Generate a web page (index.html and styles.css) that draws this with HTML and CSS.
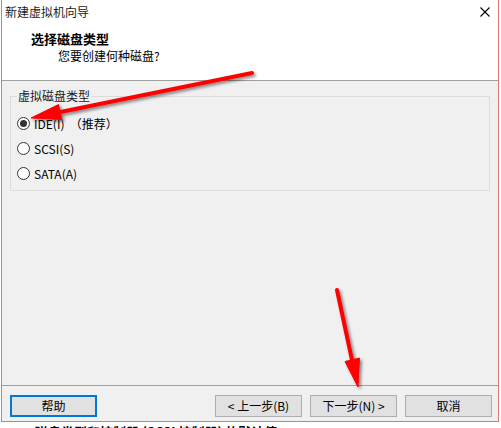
FILE: index.html
```html
<!DOCTYPE html>
<html lang="zh-CN">

<head>
    <meta charset="UTF-8">
    <title>新建虚拟机向导</title>
    <link rel="stylesheet" href="styles.css">
</head>

<body>
    <div id="screen">
        <div id="wizard">
            <div class="titlebar">
                <span class="title">新建虚拟机向导</span>
                <svg class="close" width="10" height="10" viewBox="0 0 10 10">
                    <path d="M0.5 0.5 L9.5 9.5 M9.5 0.5 L0.5 9.5" stroke="#000" stroke-width="1.1" fill="none" />
                </svg>
            </div>
            <div class="header">
                <div class="head-title">选择磁盘类型</div>
                <div class="head-sub">您要创建何种磁盘?</div>
            </div>
            <div class="body">
                <fieldset class="group">
                    <legend>虚拟磁盘类型</legend>
                    <div class="option"><span class="radio checked"></span><span>IDE(I) &nbsp;（推荐）</span></div>
                    <div class="option"><span class="radio"></span><span>SCSI(S)</span></div>
                    <div class="option"><span class="radio"></span><span>SATA(A)</span></div>
                </fieldset>
            </div>
            <div class="footer">
                <button class="btn focused">帮助</button>
                <button class="btn push">&lt; 上一步(B)</button>
                <button class="btn">下一步(N) &gt;</button>
                <button class="btn">取消</button>
            </div>
        </div>
        <div class="behind">磁盘类型和控制器 (SCSI 控制器) 的默认值</div>

        <svg class="arrows" width="501" height="428" viewBox="0 0 501 428">
            <defs>
                <filter id="shade" x="-20%" y="-20%" width="140%" height="140%">
                    <feDropShadow dx="2" dy="2" stdDeviation="1.5" flood-color="#000" flood-opacity="0.45" />
                </filter>
            </defs>
            <g filter="url(#shade)" fill="#ff0000" stroke="#ff0000">
                <line x1="252" y1="73" x2="58" y2="112.5" stroke-width="4" stroke-linecap="round" />
                <polygon points="31,118 62,119.5 58.5,104.5" stroke-width="1" stroke-linejoin="round" />
                <line x1="337" y1="290" x2="352" y2="360" stroke-width="4" stroke-linecap="round" />
                <polygon points="358,387 359.5,358 345,361.5" stroke-width="1" stroke-linejoin="round" />
            </g>
        </svg>
    </div>
</body>

</html>
```

FILE: styles.css
```css
* {
    box-sizing: border-box;
}

body {
    margin: 0;
    background-color: #ffffff;
    font-family: "Noto Sans CJK SC", "Noto Sans", sans-serif;
    font-size: 12px;
    color: #000000;
}

#screen {
    width: 501px;
    height: 428px;
    position: relative;
    overflow: hidden;
}

#wizard {
    margin-left: 1px;
    width: 498px;
    border: 1px solid #d57a74;
    border-top: none;
    background-color: #f0f0f0;
}

.titlebar {
    height: 24px;
    background-color: #ffffff;
    display: flex;
    align-items: center;
    justify-content: space-between;
    padding: 0 8px 0 3px;
}

.title {
    line-height: 16px;
    color: #1a1a1a;
}

.close {
    margin-top: -1px;
}

.header {
    height: 57px;
    background-color: #ffffff;
    border-bottom: 1px solid #a0a0a0;
    padding-top: 7px;
}

.head-title {
    padding-left: 29px;
    font-weight: bold;
    font-size: 13px;
    line-height: 16px;
}

.head-sub {
    padding-left: 56px;
    margin-top: 1px;
    line-height: 16px;
}

.body {
    height: 304px;
    padding: 8px 8px 0 8px;
}

.group {
    margin: 0;
    border: 1px solid #dcdcdc;
    padding: 8px 6px 4px 6px;
}

.group legend {
    padding: 0 1px;
    line-height: 14px;
    color: #1a1a1a;
}

.option {
    height: 25px;
    display: flex;
    align-items: center;
    gap: 4px;
    line-height: 16px;
}

.radio {
    width: 13px;
    height: 13px;
    border: 1px solid #333333;
    border-radius: 50%;
    background-color: #ffffff;
    display: flex;
    align-items: center;
    justify-content: center;
}

.radio.checked::after {
    content: "";
    width: 7px;
    height: 7px;
    border-radius: 50%;
    background-color: #333333;
}

.footer {
    border-top: 1px solid #a0a0a0;
    padding: 9px 6px 4px 8px;
    display: flex;
    gap: 8px;
}

.btn {
    width: 87px;
    height: 22px;
    border: 1px solid #adadad;
    background-color: #e1e1e1;
    font-family: "Noto Sans CJK SC", "Noto Sans", sans-serif;
    font-size: 12px;
    color: #000000;
    padding: 0;
    line-height: 16px;
}

.btn.focused {
    border: 2px solid #0078d7;
}

.btn.push {
    margin-left: auto;
}

.behind {
    height: 7px;
    overflow: hidden;
    padding: 1px 0 0 35px;
    font-weight: bold;
    font-size: 13px;
    line-height: 18px;
    white-space: nowrap;
}

.arrows {
    position: absolute;
    top: 0;
    left: 0;
    pointer-events: none;
}
```
